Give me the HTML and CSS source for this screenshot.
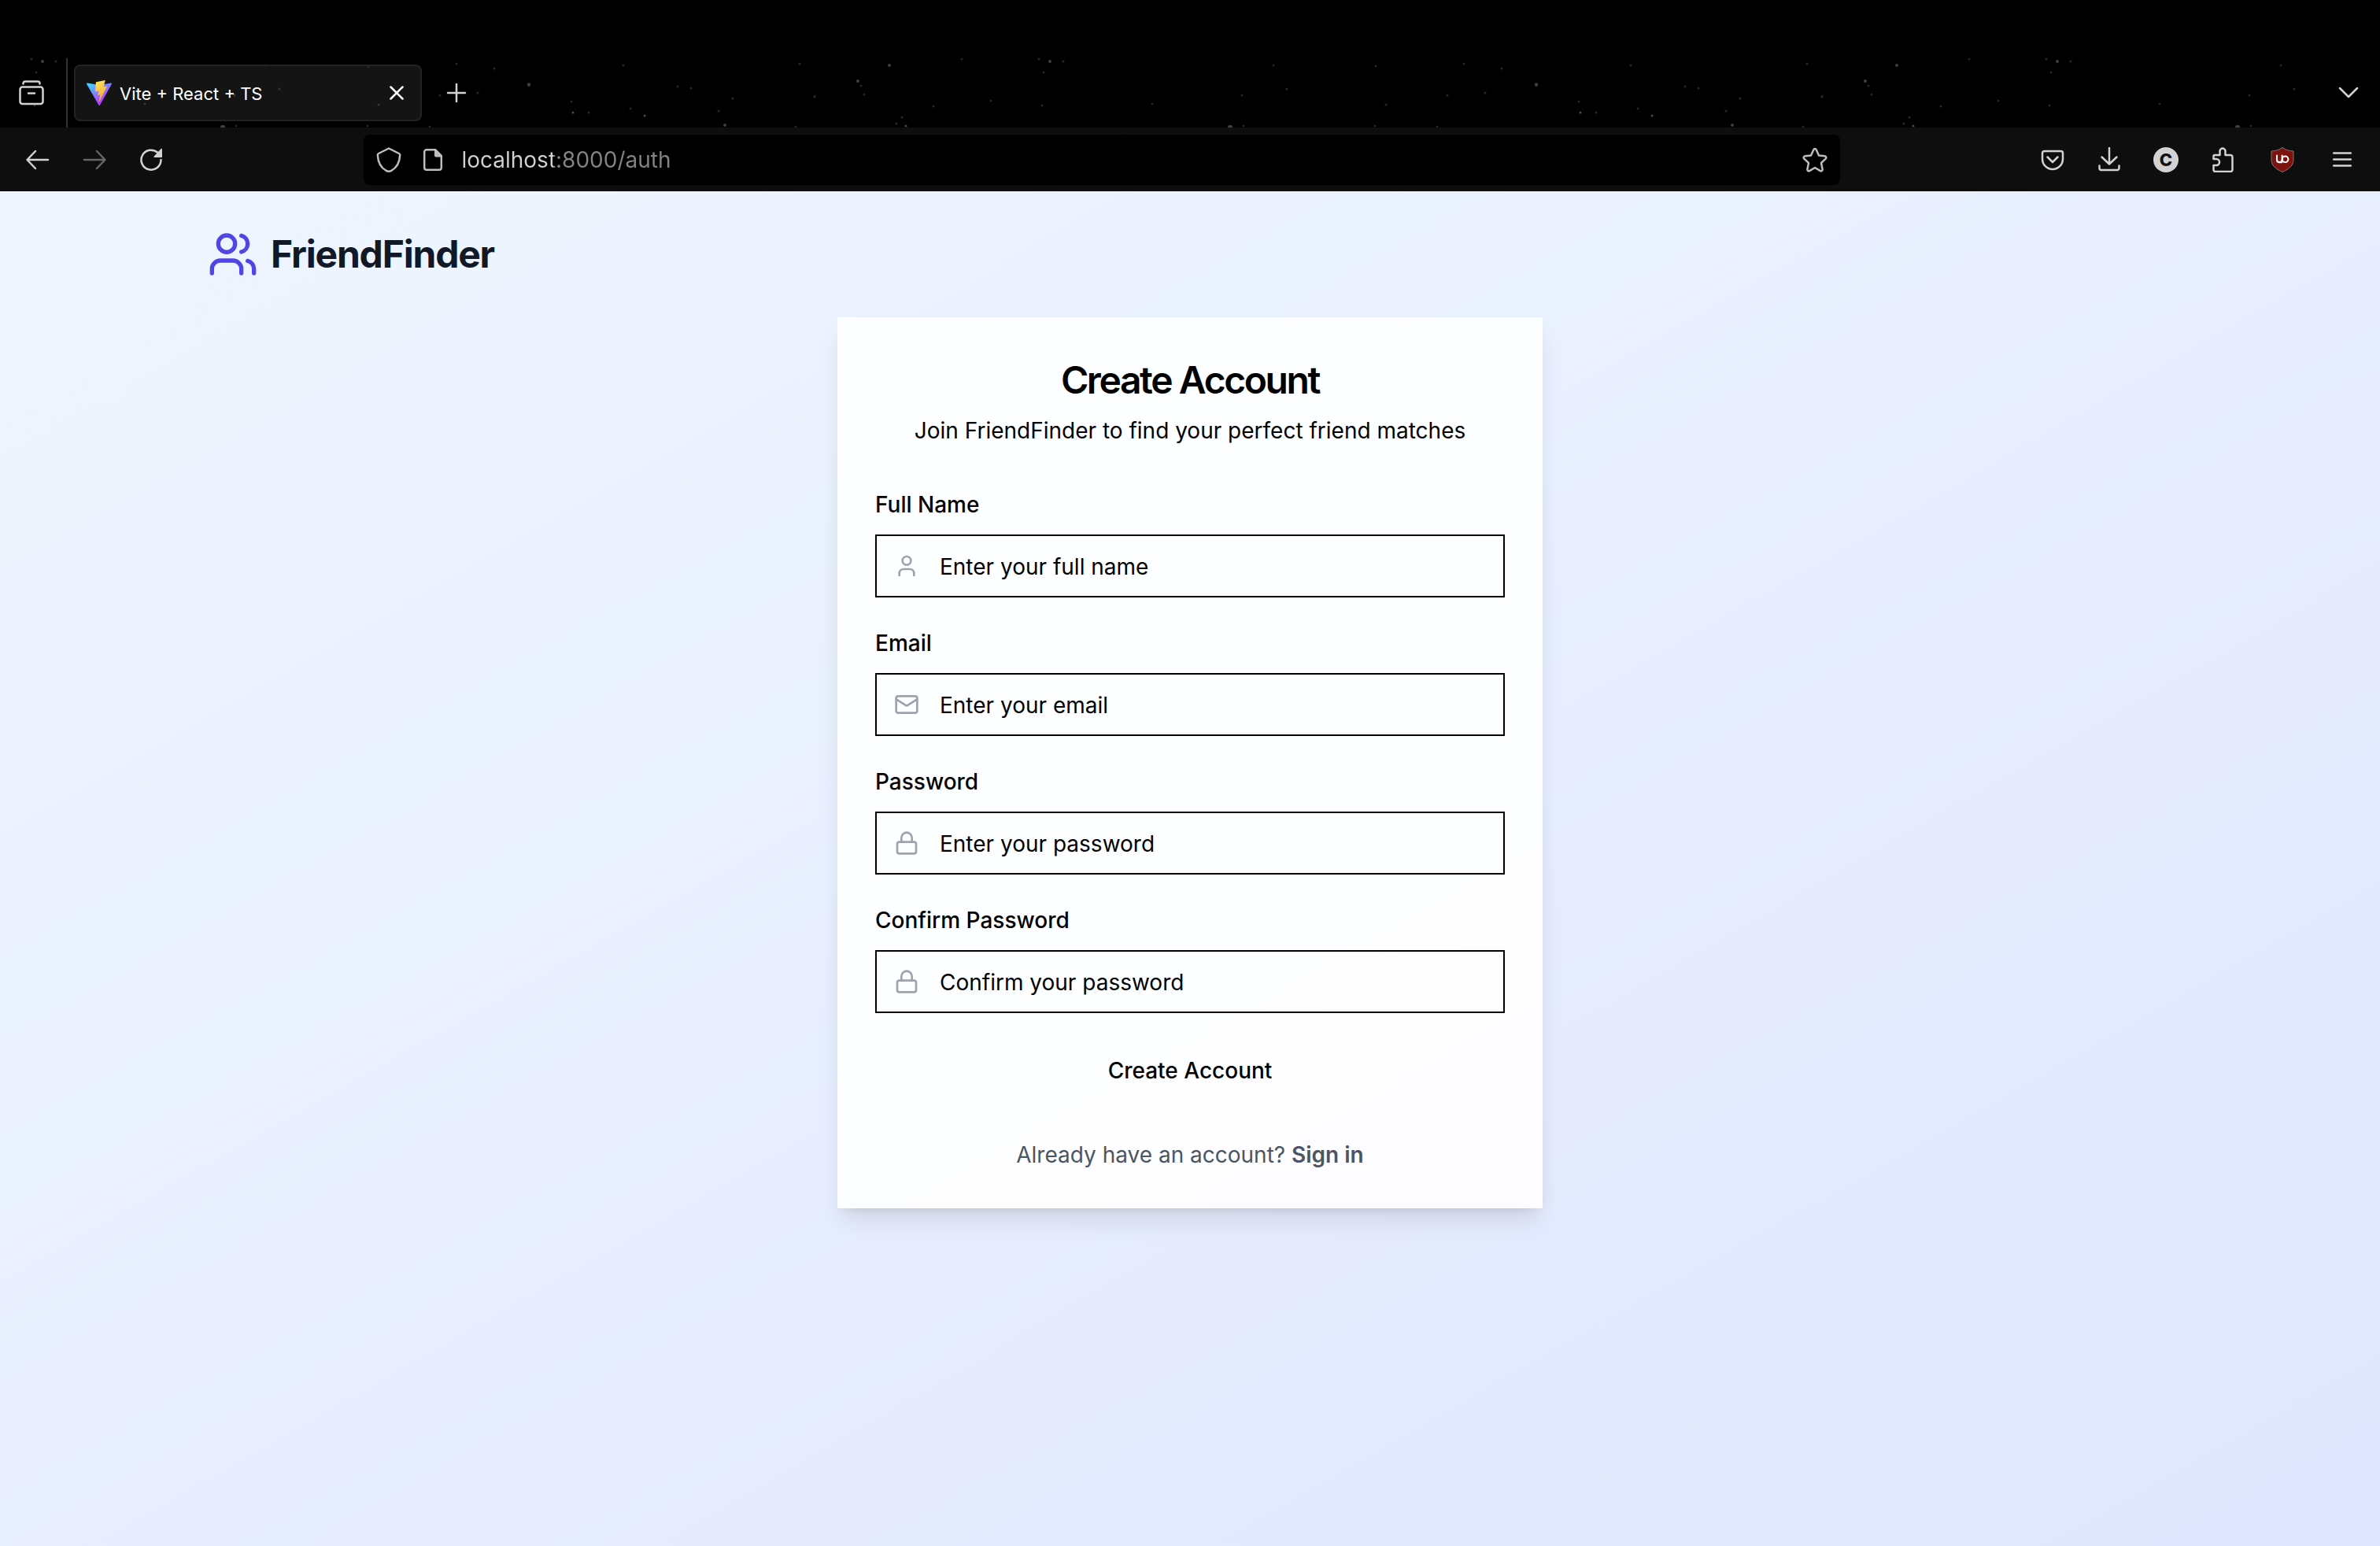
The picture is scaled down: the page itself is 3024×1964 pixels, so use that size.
FILE: index.html
```html
<!DOCTYPE html>
<html lang="en">
<head>
<meta charset="utf-8">
<meta name="viewport" content="width=device-width, initial-scale=1">
<title>Vite + React + TS</title>
<link rel="stylesheet" href="styles.css">
</head>
<body>
<header class="browser">
  <div class="tab-bar">
    <button class="tab-bar-button view-button" type="button" aria-label="Recent browsing">
      <svg class="icon" viewBox="0 0 32 32"><rect x="1.5" y="8.5" width="29" height="21.500" rx="3"/><path d="M5.500 4.500V4a2.500 2.500 0 0 1 2.500-2.500h16A2.500 2.500 0 0 1 26.500 4v.5M12 16.500h8"/></svg>
    </button>
    <div class="tab">
      <svg class="favicon" viewBox="0 0 32 32">
        <defs>
          <linearGradient id="vite-blue" x1="0" y1="0.100" x2="0.600" y2="0.900"><stop offset="0" stop-color="#41d1ff"/><stop offset="1" stop-color="#bd34fe"/></linearGradient>
          <linearGradient id="vite-gold" x1="0.400" y1="0" x2="0.600" y2="1"><stop offset="0" stop-color="#ffe25a"/><stop offset="1" stop-color="#f5a030"/></linearGradient>
        </defs>
        <path fill="url(#vite-blue)" d="M31.900 4.700 17 31.400a.9.9 0 0 1-1.600 0L.1 4.700a.9.900 0 0 1 1-1.300l15 2.700h.3l14.600-2.700a.9.900 0 0 1 .9 1.300Z"/>
        <path fill="url(#vite-gold)" d="M23.200.1 12.200 2.200a.4.400 0 0 0-.4.400l-.7 11.500a.4.400 0 0 0 .5.400l3.100-.7a.4.400 0 0 1 .5.500l-.9 4.400a.4.400 0 0 0 .5.500l1.900-.6a.4.400 0 0 1 .5.500l-1.400 7c-.1.400.5.700.7.300l.2-.2 9-17.900a.4.400 0 0 0-.4-.6l-3.200.6a.4.400 0 0 1-.5-.5l2.100-7.200a.4.400 0 0 0-.5-.5Z"/>
      </svg>
      <span class="tab-title">Vite + React + TS</span>
      <button class="tab-close" type="button" aria-label="Close tab">
        <svg class="icon" viewBox="0 0 32 32"><path d="m8.500 8.500 15 15M23.500 8.500l-15 15"/></svg>
      </button>
    </div>
    <button class="tab-bar-button" type="button" aria-label="New tab">
      <svg class="icon" viewBox="0 0 32 32"><path d="M16 5v22M5 16h22"/></svg>
    </button>
    <button class="tab-bar-button list-button" type="button" aria-label="List all tabs">
      <svg class="icon" viewBox="0 0 32 32"><path d="m5 10 11 11 11-11"/></svg>
    </button>
  </div>

  <div class="toolbar">
    <button class="tool" type="button" aria-label="Go back">
      <svg class="icon" viewBox="0 0 32 32"><path d="M29 16H3M13 5 2.500 16 13 27"/></svg>
    </button>
    <button class="tool" type="button" aria-label="Go forward" disabled>
      <svg class="icon" viewBox="0 0 32 32"><path d="M3 16h26M19 5l10.500 11L19 27"/></svg>
    </button>
    <button class="tool" type="button" aria-label="Reload">
      <svg class="icon" viewBox="0 0 32 32"><path d="M24.500 7A12.500 12.500 0 1 0 28.500 16"/><path class="solid" d="M30 2.500v10a.5.500 0 0 1-.5.500h-9c-1 0-1.300-1-.7-1.600l8.500-9.200c.7-.7 1.700-.5 1.700.3Z"/></svg>
    </button>
    <div class="spring"></div>
    <div class="url-bar">
      <svg class="icon url-shield" viewBox="0 0 32 32"><path d="M16 1.500 29 8c.8.400 1.200 1 1.200 1.800-.4 9.200-3.700 16.200-11 20a6.500 6.500 0 0 1-6.400 0c-7.300-3.800-10.600-10.800-11-20C1.800 9 2.200 8.400 3 8Z"/></svg>
      <svg class="icon" viewBox="0 0 32 32"><path d="M19 3.200H8A2.800 2.800 0 0 0 5.200 6v20A2.800 2.800 0 0 0 8 28.800h16a2.800 2.800 0 0 0 2.800-2.800V11Z"/><path class="solid" d="M18 2.500h1.500l8.500 8.500v1.500h-8a2 2 0 0 1-2-2Z"/></svg>
      <input class="url-input" type="text" value="localhost:8000/auth" aria-label="Address" spellcheck="false">
      <button class="url-action" type="button" aria-label="Bookmark this page">
        <svg class="icon" viewBox="0 0 32 32"><path d="M14.300 3.200c.7-1.500 2.700-1.500 3.400 0l3.300 7.300 7.500.8c1.800.2 2.400 2.200 1.200 3.400L24 20l1.600 8.100c.3 1.700-1.300 2.700-2.700 2L16 26l-6.900 4.100c-1.400.7-3-.3-2.700-2L8 20l-5.700-5.300c-1.200-1.200-.6-3.200 1.200-3.400l7.500-.8Z"/></svg>
      </button>
    </div>
    <div class="spring"></div>
    <button class="tool" type="button" aria-label="Save to Pocket">
      <svg class="icon" viewBox="0 0 32 32"><path d="M5.500 5h21A2.500 2.500 0 0 1 29 7.500V15a13 13 0 0 1-26 0V7.500A2.500 2.500 0 0 1 5.500 5ZM9.500 12.500l6.500 6.500 6.500-6.500"/></svg>
    </button>
    <button class="tool" type="button" aria-label="Downloads">
      <svg class="icon" viewBox="0 0 32 32"><path d="M16 1v20M6.500 12.500 16 21.500l9.500-9M3.500 23.500v3A2.500 2.500 0 0 0 6 29h20a2.500 2.500 0 0 0 2.500-2.500v-3"/></svg>
    </button>
    <button class="tool" type="button" aria-label="Account"><span class="avatar">C</span></button>
    <button class="tool" type="button" aria-label="Extensions">
      <svg class="icon" viewBox="0 0 32 32"><path d="M6 10h6.500V5a3.500 3.500 0 0 1 7 0v5H26a2.500 2.500 0 0 1 2.500 2.500v16A2.500 2.500 0 0 1 26 31H7a2.500 2.500 0 0 1-2.500-2.500v-5.500H8a4 4 0 0 0 0-8H4.500v-3.500A1.500 1.500 0 0 1 6 10Z"/></svg>
    </button>
    <button class="tool tool-spaced" type="button" aria-label="uBlock Origin">
      <svg class="icon" viewBox="0 0 32 32"><path class="shield" d="M16 .5c4 2.800 8.500 4.300 14 4.500v11c0 7-5 11.500-14 15.500C7 27.500 2 23 2 16V5C7.500 4.800 12 3.300 16 .5Z"/><path class="shield-mark" d="M9 10.500v5.300a3.300 3.300 0 0 0 6.600 0v-5.300M9 16.200c0 1.900 1.300 3 3.300 3h3"/><circle class="shield-mark" cx="19.600" cy="15.300" r="3.800"/></svg>
    </button>
    <button class="tool tool-spaced" type="button" aria-label="Open application menu">
      <svg class="icon" viewBox="0 0 32 32"><path d="M5.200 7.500h21.600M5.200 15.500h21.600M5.200 23.500h21.600"/></svg>
    </button>
  </div>
</header>

<main class="page">
  <div class="container">
    <a class="brand" href="/">
      <svg class="brand-icon" viewBox="0 0 24 24"><path d="M16 21v-2a4 4 0 0 0-4-4H6a4 4 0 0 0-4 4v2"/><circle cx="9" cy="7" r="4"/><path d="M22 21v-2a4 4 0 0 0-3-3.870M16 3.130a4 4 0 0 1 0 7.750"/></svg>
      <span>FriendFinder</span>
    </a>

    <section class="card">
      <h1 class="card-title">Create Account</h1>
      <p class="card-subtitle">Join FriendFinder to find your perfect friend matches</p>

      <form class="form">
        <div class="field">
          <label for="full-name">Full Name</label>
          <div class="control">
            <svg class="control-icon" viewBox="0 0 24 24"><path d="M19 21v-2a4 4 0 0 0-4-4H9a4 4 0 0 0-4 4v2"/><circle cx="12" cy="7" r="4"/></svg>
            <input id="full-name" type="text" placeholder="Enter your full name">
          </div>
        </div>
        <div class="field">
          <label for="email">Email</label>
          <div class="control">
            <svg class="control-icon" viewBox="0 0 24 24"><rect x="2" y="4" width="20" height="16" rx="2"/><path d="m22 7-8.970 5.700a1.940 1.940 0 0 1-2.060 0L2 7"/></svg>
            <input id="email" type="email" placeholder="Enter your email">
          </div>
        </div>
        <div class="field">
          <label for="password">Password</label>
          <div class="control">
            <svg class="control-icon" viewBox="0 0 24 24"><rect x="3" y="11" width="18" height="11" rx="2"/><path d="M7 11V7a5 5 0 0 1 10 0v4"/></svg>
            <input id="password" type="password" placeholder="Enter your password">
          </div>
        </div>
        <div class="field">
          <label for="confirm-password">Confirm Password</label>
          <div class="control">
            <svg class="control-icon" viewBox="0 0 24 24"><rect x="3" y="11" width="18" height="11" rx="2"/><path d="M7 11V7a5 5 0 0 1 10 0v4"/></svg>
            <input id="confirm-password" type="password" placeholder="Confirm your password">
          </div>
        </div>
        <button class="submit" type="submit">Create Account</button>
      </form>

      <p class="switch">Already have an account? <a href="/signin">Sign in</a></p>
    </section>
  </div>
</main>
</body>
</html>
```
FILE: styles.css
```css
*,
*::before,
*::after {
  box-sizing: border-box;
}

body {
  margin: 0;
  min-height: 100vh;
  display: flex;
  flex-direction: column;
  font-family: Inter, "Liberation Sans", sans-serif;
  font-size: 28px;
  line-height: 40px;
  color: #000;
}

h1,
p {
  margin: 0;
}

button,
input {
  font: inherit;
  color: inherit;
  margin: 0;
  padding: 0;
  border: 0;
  background: none;
}

a {
  color: inherit;
  text-decoration: none;
}

svg {
  display: block;
  flex: none;
}

/* Browser chrome */

.browser {
  padding-top: 74px;
  color: #d2d2d2;
  background-color: #000;
  background-image: url("data:image/svg+xml,%3Csvg xmlns='http://www.w3.org/2000/svg' width='1280' height='169'%3E%3Cg stroke='%23404040' stroke-width='4' stroke-linecap='round'%3E%3Cpath d='M672 33v1M54 4v0M282 87h2M1090 29v0M1130 9v0M921 85v0'/%3E%3C/g%3E%3Cg stroke='%23544540' stroke-width='3' stroke-linecap='round'%3E%3Cpath d='M728 69v0M819 73v0M1151 86v0'/%3E%3C/g%3E%3Cg stroke='%23262626' stroke-width='3' stroke-linecap='round'%3E%3Cpath d='M861 36v0M878 38v0M748 69v0M801 64v0M726 55v0M913 67v0M931 51v0M1011 87v0M1016 7v0M792 9v0M1094 35v0M1098 46v0M1035 48v1M1146 75v0M1139 83v0M1222 1v0M40 1v0M71 4v0M1259 54v0M44 60v0M46 18v0M1186 61v0M184 58v0M298 47v0M300 86v0M338 9v0M355 39v0M468 10v0M467 86v0M546 87v0M481 59v0M559 47v0M580 7v0M628 13v0M607 44v0M23 101v0M88 152v0M447 149v0M120 93v0M151 94v0M405 101v0M596 168v0M301 132v0M238 120v0M1120 110v0M960 140v0M860 98v0M740 155v0'/%3E%3C/g%3E%3C/svg%3E");
  background-repeat: repeat-x;
  background-position: 0 74px;
}

.tab-bar {
  display: flex;
  align-items: center;
  height: 88px;
}

.icon {
  width: 32px;
  height: 32px;
  fill: none;
  stroke: currentColor;
  stroke-width: 2.500;
  stroke-linecap: round;
  stroke-linejoin: round;
}

.solid {
  fill: currentColor;
  stroke: none;
}

.tab-bar-button {
  display: flex;
  align-items: center;
  justify-content: center;
  width: 80px;
  height: 88px;
}

.view-button {
  width: 86px;
  padding-right: 4px;
  border-right: 2px solid #333;
}

.list-button {
  margin-left: auto;
}

.tab {
  display: flex;
  align-items: center;
  width: 442px;
  height: 72px;
  margin-left: 8px;
  margin-right: 4px;
  padding: 0 14px;
  border: 2px solid #232323;
  border-radius: 8px;
  background: rgba(255, 255, 255, 0.08);
  color: #fff;
}

.favicon {
  width: 32px;
  height: 32px;
}

.tab-title {
  flex: 1;
  margin-left: 10px;
  padding-top: 2px;
  font-size: 22px;
}

.tab-close .icon {
  stroke-width: 2.500;
}

.toolbar {
  display: flex;
  align-items: center;
  height: 81px;
  padding: 0 12px;
  background: rgba(16, 16, 16, 0.9);
}

.tool {
  display: flex;
  align-items: center;
  justify-content: center;
  width: 72px;
  height: 64px;
}

.tool:disabled {
  color: #666;
}

.tool-spaced {
  margin-left: 4px;
}

.spring {
  flex: 1 1 0;
}

.url-bar {
  flex: 8 1 0;
  display: flex;
  align-items: center;
  gap: 24px;
  min-width: 0;
  height: 64px;
  border-radius: 8px;
  background: #000;
  color: #bdbdbd;
}

.url-shield {
  margin-left: 16px;
}

.url-action {
  margin-right: 16px;
}

/* The host part of the address is lighter than the port and path. */
.url-input {
  flex: 1;
  min-width: 0;
  height: 40px;
  margin-left: -4px;
  outline: 0;
  color: transparent;
  background: linear-gradient(90deg, #d2d2d2 117px, #848484 117px);
  background-clip: text;
  -webkit-background-clip: text;
}

.avatar {
  width: 32px;
  height: 32px;
  border-radius: 50%;
  background: #d2d2d2;
  color: #101010;
  font-size: 22px;
  font-weight: 800;
  line-height: 32px;
  text-align: center;
}

.shield {
  fill: #7c130d;
  stroke: #85706e;
  stroke-width: 1;
}

.shield-mark {
  stroke: #fff;
  stroke-width: 2;
}

/* Page */

.page {
  flex: 1;
  background: linear-gradient(to bottom right, #eff6ff, #e0e6fd);
}

.container {
  max-width: 2560px;
  margin: 0 auto;
  padding: 48px 32px;
}

.brand {
  display: flex;
  align-items: center;
  gap: 16px;
  width: fit-content;
  font-size: 48px;
  font-weight: 700;
  line-height: 64px;
  letter-spacing: -0.025em;
  color: #111827;
}

.brand-icon {
  width: 64px;
  height: 64px;
  fill: none;
  stroke: #4f46e5;
  stroke-width: 2;
  stroke-linecap: round;
  stroke-linejoin: round;
}

.card {
  max-width: 896px;
  margin: 48px auto 0;
  padding: 48px;
  background: rgba(255, 255, 255, 0.9);
  box-shadow: 0 20px 30px -6px rgba(0, 0, 0, 0.1), 0 8px 12px -8px rgba(0, 0, 0, 0.1);
  text-align: center;
}

.card-title {
  font-size: 48px;
  font-weight: 600;
  line-height: 64px;
  letter-spacing: -0.05em;
}

.card-subtitle {
  margin-top: 12px;
}

.form {
  display: flex;
  flex-direction: column;
  gap: 44px;
  margin-top: 60px;
}

.field {
  display: flex;
  flex-direction: column;
  gap: 24px;
  text-align: left;
}

.field label {
  font-weight: 500;
  line-height: 28px;
}

.control {
  display: flex;
  align-items: center;
  gap: 26px;
  height: 80px;
  padding: 0 22px;
  border: 2px solid #000;
}

.control-icon {
  width: 32px;
  height: 32px;
  fill: none;
  stroke: #9ca3af;
  stroke-width: 2;
  stroke-linecap: round;
  stroke-linejoin: round;
}

.control input {
  flex: 1;
  min-width: 0;
  height: 76px;
  padding-top: 2px;
  outline: 0;
}

.control input::placeholder {
  color: #000;
  opacity: 1;
}

.submit {
  height: 80px;
  margin-top: -12px;
  padding-top: 2px;
  font-weight: 500;
}

.switch {
  margin-top: 48px;
  color: #4b5563;
}

.switch a {
  font-weight: 600;
}
```
